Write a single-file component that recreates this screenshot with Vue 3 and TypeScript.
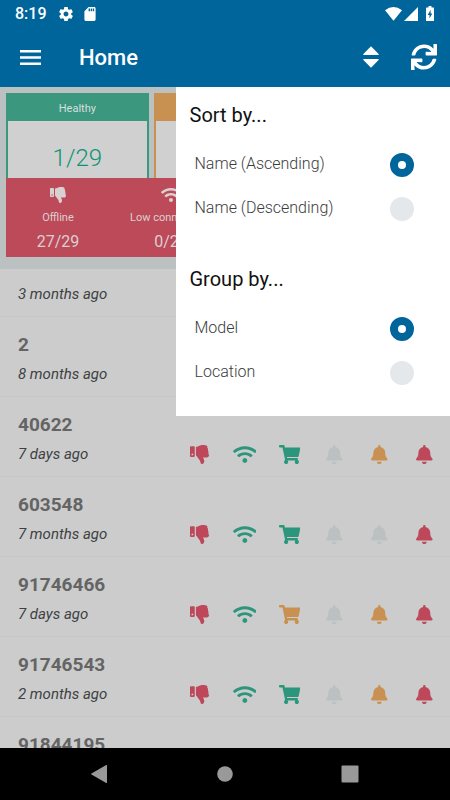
<script setup lang="ts">
import { ref } from 'vue'

type Tone = 'red' | 'green' | 'orange' | 'grey'
interface Glyph { box: string; d: string }
interface Device { name?: string; seen: string; tones: Tone[] }

const thumb: Glyph = {
  box: '0 0 512 512',
  d: 'M0 56v240c0 13.255 10.745 24 24 24h80c13.255 0 24-10.745 24-24V56c0-13.255-10.745-24-24-24H24C10.745 32 0 42.745 0 56zm40 200c0-13.255 10.745-24 24-24s24 10.745 24 24-10.745 24-24 24-24-10.745-24-24zm272 256c-20.183 0-29.485-39.293-33.931-57.795-5.206-21.666-10.589-44.070-25.393-58.902-32.469-32.524-49.503-73.967-89.117-113.111a11.980 11.980 0 0 1-3.558-8.521V59.901c0-6.541 5.243-11.878 11.784-11.998 15.831-.29 36.694-9.079 52.651-16.178C256.189 17.598 295.709.017 343.995 0h2.844c42.777 0 93.363.413 113.774 29.737 8.392 12.057 10.446 27.034 6.148 44.632 16.312 17.053 25.063 48.863 16.382 74.757 17.544 23.432 19.143 56.132 9.308 79.469l.11.11c11.893 11.949 19.523 31.259 19.439 49.197-.156 30.352-26.157 58.096-59.553 58.096H350.723C358.03 364.34 384 388.132 384 430.548 384 504 336 512 312 512z',
}
const wifi: Glyph = {
  box: '0 0 640 512',
  d: 'M634.91 154.88C457.74-8.99 182.19-8.93 5.09 154.88c-6.66 6.16-6.79 16.59-.35 22.98l34.24 33.97c6.14 6.1 16.02 6.23 22.4.38 145.92-133.68 371.3-133.71 517.25 0 6.38 5.85 16.26 5.71 22.4-.38l34.24-33.97c6.43-6.39 6.3-16.82-.36-22.98zM320 352c-35.35 0-64 28.65-64 64s28.65 64 64 64 64-28.65 64-64-28.65-64-64-64zm202.67-83.59c-115.26-101.93-290.21-101.82-405.34 0-6.9 6.1-7.12 16.69-.57 23.15l34.44 33.99c6 5.92 15.66 6.32 22.05.8 83.95-72.57 209.74-72.41 293.49 0 6.39 5.52 16.05 5.13 22.05-.8l34.44-33.99c6.56-6.46 6.33-17.06-.56-23.15z',
}
const cart: Glyph = {
  box: '0 0 576 512',
  d: 'M528.12 301.319l47.273-208C578.806 78.301 567.391 64 551.99 64H159.208l-9.166-44.81C147.758 8.021 137.93 0 126.529 0H24C10.745 0 0 10.745 0 24v16c0 13.255 10.745 24 24 24h69.883l70.248 343.435C147.325 417.1 136 435.222 136 456c0 30.928 25.072 56 56 56s56-25.072 56-56c0-15.674-6.447-29.835-16.824-40h209.647C430.447 426.165 424 440.326 424 456c0 30.928 25.072 56 56 56s56-25.072 56-56c0-22.172-12.888-41.332-31.579-50.405l5.517-24.276c3.413-15.018-8.002-29.319-23.403-29.319H218.117l-6.545-32h293.145c11.206 0 20.92-7.754 23.403-18.681z',
}
const bell: Glyph = {
  box: '0 0 448 512',
  d: 'M224 512c35.32 0 63.97-28.65 63.97-64H160.03c0 35.35 28.65 64 63.97 64zm215.39-149.71c-19.32-20.76-55.47-51.99-55.47-154.29 0-77.7-54.48-139.9-127.94-155.16V32c0-17.67-14.32-32-31.98-32s-31.98 14.33-31.98 32v20.84C118.56 68.1 64.08 130.3 64.08 208c0 102.3-36.15 133.53-55.47 154.29-6 6.45-8.66 14.16-8.61 21.71.11 16.4 12.98 32 32.1 32h383.8c19.12 0 32-15.6 32.1-32 .05-7.55-2.61-15.27-8.61-21.71z',
}
const glyphs: Glyph[] = [thumb, wifi, cart, bell, bell, bell]

const devices: Device[] = [
  { seen: '3 months ago', tones: [] },
  { name: '2', seen: '8 months ago', tones: [] },
  { name: '40622', seen: '7 days ago', tones: ['red', 'green', 'green', 'grey', 'orange', 'red'] },
  { name: '603548', seen: '7 months ago', tones: ['red', 'green', 'green', 'grey', 'grey', 'red'] },
  { name: '91746466', seen: '7 days ago', tones: ['red', 'green', 'orange', 'grey', 'orange', 'red'] },
  { name: '91746543', seen: '2 months ago', tones: ['red', 'green', 'green', 'grey', 'orange', 'red'] },
  { name: '91844195', seen: '', tones: [] },
]

const menuOpen = ref(true)
const sortBy = ref('asc')
const groupBy = ref('model')
const sortOptions = [
  { value: 'asc', label: 'Name (Ascending)' },
  { value: 'desc', label: 'Name (Descending)' },
]
const groupOptions = [
  { value: 'model', label: 'Model' },
  { value: 'location', label: 'Location' },
]
</script>

<template>
  <div class="app">
    <header class="top">
      <div class="status">
        <span class="clock">8:19</span>
        <svg class="gear" viewBox="2 2 20 20"><path d="M19.43 12.98c.04-.32.07-.64.07-.98s-.03-.66-.07-.98l2.11-1.65c.19-.15.24-.42.12-.64l-2-3.46c-.12-.22-.39-.3-.61-.22l-2.49 1c-.52-.4-1.08-.73-1.69-.98l-.38-2.65C14.46 2.18 14.25 2 14 2h-4c-.25 0-.46.18-.49.42l-.38 2.65c-.61.25-1.17.59-1.69.98l-2.49-1c-.23-.09-.49 0-.61.22l-2 3.46c-.13.22-.07.49.12.64l2.11 1.65c-.04.32-.07.65-.07.98s.03.66.07.98l-2.11 1.65c-.19.15-.24.42-.12.64l2 3.46c.12.22.39.3.61.22l2.49-1c.52.4 1.08.73 1.69.98l.38 2.65c.03.24.24.42.49.42h4c.25 0 .46-.18.49-.42l.38-2.65c.61-.25 1.17-.59 1.69-.98l2.49 1c.23.09.49 0 .61-.22l2-3.46c.12-.22.07-.49-.12-.64l-2.11-1.65zM12 15.5c-1.93 0-3.5-1.57-3.5-3.5s1.57-3.5 3.5-3.5 3.5 1.57 3.5 3.5-1.57 3.5-3.5 3.5z" /></svg>
        <svg class="sd" viewBox="4 2 16 20"><path d="M18 2h-8L4.02 8 4 20c0 1.100.9 2 2 2h12c1.100 0 2-.9 2-2V4c0-1.100-.9-2-2-2zm-6 6h-2V4h2v4zm3 0h-2V4h2v4zm3 0h-2V4h2v4z" /></svg>
        <span class="spacer"></span>
        <svg class="net" viewBox="0 0 17 14"><path d="M0 3.200Q8.500-3.200 17 3.200L8.500 13.700z" /></svg>
        <svg class="signal" viewBox="0 0 14 14"><path d="M14 0v14H0z" /></svg>
        <svg class="battery" viewBox="0 0 8 15"><path fill-rule="evenodd" d="M2.500 0h3v1.500H7.500q.5 0 .5.500v12.500q0 .5-.5.500h-7q-.5 0-.5-.5V2q0-.5.5-.5h2zM4.600 3.800L1.700 9h1.800v3.500L6.300 7.500H4.600z" /></svg>
      </div>
      <div class="bar">
        <button class="tool" aria-label="Open navigation">
          <svg class="burger" viewBox="0 0 21 15"><path d="M0 0h21v2.400H0zM0 6.300h21v2.400H0zM0 12.600h21V15H0z" /></svg>
        </button>
        <h1>Home</h1>
        <button class="tool" aria-label="Sort and group" @click="menuOpen = !menuOpen">
          <svg class="sort" viewBox="0 0 16 22"><path d="M8 .3L15.600 8q.6 1-.4 1H.8q-1 0-.4-1zM8 21.700L15.600 14q.6-1-.4-1H.8q-1 0-.4 1z" /></svg>
        </button>
        <button class="tool refresh" aria-label="Refresh">
          <svg class="sync" viewBox="0 0 512 512"><path d="M440.650 12.570l4 82.770A247.160 247.160 0 0 0 255.830 8C134.730 8 33.910 94.920 12.290 209.820A12 12 0 0 0 24.090 224h49.050a12 12 0 0 0 11.670-9.260 175.910 175.910 0 0 1 317-56.940l-101.460-4.860a12 12 0 0 0-12.570 12v47.410a12 12 0 0 0 12 12H500a12 12 0 0 0 12-12V12a12 12 0 0 0-12-12h-47.370a12 12 0 0 0-11.980 12.570zM255.830 432a175.610 175.610 0 0 1-146-77.800l101.800 4.870a12 12 0 0 0 12.570-12v-47.400a12 12 0 0 0-12-12H12a12 12 0 0 0-12 12V500a12 12 0 0 0 12 12h47.350a12 12 0 0 0 12-12.600l-4.150-82.570A247.170 247.170 0 0 0 255.830 504c121.110 0 221.930-86.920 243.550-201.820a12 12 0 0 0-11.800-14.180h-49.050a12 12 0 0 0-11.670 9.260A175.860 175.860 0 0 1 255.830 432z" /></svg>
        </button>
      </div>
    </header>

    <main class="content">
      <section class="summary">
        <div class="cards">
          <div class="card healthy">
            <div class="card-head">Healthy</div>
            <div class="card-value">1/29</div>
          </div>
          <div class="card warning"><div class="card-head"></div></div>
        </div>
        <div class="alerts">
          <div class="alert">
            <svg class="alert-icon" :viewBox="thumb.box"><path :d="thumb.d" /></svg>
            <span class="alert-label">Offline</span>
            <span class="alert-value">27/29</span>
          </div>
          <div class="alert">
            <svg class="alert-icon" :viewBox="wifi.box"><path :d="wifi.d" /></svg>
            <span class="alert-label">Low connectivity</span>
            <span class="alert-value">0/29</span>
          </div>
        </div>
      </section>

      <ul class="devices">
        <li v-for="device in devices" :key="device.name ?? device.seen" class="device">
          <h2 v-if="device.name">{{ device.name }}</h2>
          <div class="detail">
            <span class="seen">{{ device.seen }}</span>
            <div class="icons">
              <svg v-for="(tone, i) in device.tones" :key="i" class="icon" :class="tone" :viewBox="glyphs[i].box">
                <path :d="glyphs[i].d" />
              </svg>
            </div>
          </div>
        </li>
      </ul>

      <div v-if="menuOpen" class="menu">
        <section role="radiogroup" aria-labelledby="sort-title">
          <h3 id="sort-title">Sort by...</h3>
          <label v-for="o in sortOptions" :key="o.value" class="option">
            <span>{{ o.label }}</span>
            <input v-model="sortBy" type="radio" name="sort" :value="o.value" />
          </label>
        </section>
        <section role="radiogroup" aria-labelledby="group-title">
          <h3 id="group-title">Group by...</h3>
          <label v-for="o in groupOptions" :key="o.value" class="option">
            <span>{{ o.label }}</span>
            <input v-model="groupBy" type="radio" name="group" :value="o.value" />
          </label>
        </section>
      </div>
    </main>

    <nav class="system">
      <button aria-label="Back"><svg viewBox="0 0 18 18"><path d="M17 .5v17q0 .8-.8.400L1.500 9.500q-.8-.5 0-1L16.200.1q.8-.4.8.400z" /></svg></button>
      <button aria-label="Home screen"><svg viewBox="0 0 18 18"><circle cx="9" cy="9" r="7.800" /></svg></button>
      <button aria-label="Recent apps"><svg viewBox="0 0 18 18"><rect x=".5" y=".5" width="17" height="17" rx="1" /></svg></button>
    </nav>
  </div>
</template>

<style>
body {
  margin: 0;
}
</style>

<style scoped>
.app {
  display: flex;
  flex-direction: column;
  height: 100vh;
  overflow: hidden;
  background: #ccc;
  font-family: Roboto, sans-serif;
}
button {
  display: flex;
  align-items: center;
  justify-content: center;
  padding: 0;
  border: 0;
  background: none;
  color: inherit;
}
svg {
  display: block;
  fill: currentColor;
}
h1, h2, h3, ul {
  margin: 0;
  padding: 0;
}
.top {
  flex: none;
  background: #00659b;
  color: #fff;
}
.status {
  display: flex;
  align-items: center;
  height: 27px;
  padding: 0 16px 0 15px;
}
.clock {
  margin-right: 12px;
  font-size: 16px;
  font-weight: 500;
  line-height: 27px;
}
.gear {
  width: 14px;
  height: 14px;
  margin-right: 11px;
}
.sd {
  width: 12px;
  height: 14px;
}
.spacer {
  flex: 1;
}
.net {
  width: 17px;
  height: 14px;
  margin-right: 2px;
}
.signal {
  width: 14px;
  height: 14px;
  margin-right: 8px;
}
.battery {
  width: 8px;
  height: 15px;
}
.bar {
  display: flex;
  align-items: center;
  height: 60px;
  padding: 0 10px 0 14px;
}
.tool {
  width: 32px;
  height: 40px;
}
.refresh {
  margin-left: 21px;
}
.burger {
  width: 21px;
  height: 15px;
}
.sort {
  width: 16px;
  height: 22px;
}
.sync {
  width: 26px;
  height: 26px;
}
h1 {
  flex: 1;
  margin-left: 33px;
  padding-top: 2px;
  font-size: 22px;
  font-weight: 500;
  line-height: 30px;
}
.content {
  position: relative;
  flex: 1;
  min-height: 0;
  overflow: hidden;
}
.summary {
  padding: 6px 6px 12px;
  background: #bbc0c1;
}
.cards {
  display: grid;
  grid-template-columns: repeat(3, 1fr);
  gap: 5px;
  height: 85px;
}
.card {
  display: flex;
  flex-direction: column;
  box-sizing: border-box;
  border: 2px solid;
  border-bottom: 0;
  background: #d0d0d0;
  text-align: center;
}
.healthy {
  border-color: #3b987f;
}
.warning {
  border-color: #c89151;
}
.card-head {
  height: 26px;
  font-size: 11px;
  line-height: 28px;
  color: #d5dfdc;
}
.healthy .card-head {
  background: #3b987f;
}
.warning .card-head {
  background: #c89151;
}
.card-value {
  padding-top: 17px;
  font-size: 24px;
  font-weight: 300;
  line-height: 40px;
  color: #0d9475;
}
.alerts {
  display: grid;
  grid-template-columns: 104px 122px 1fr;
  height: 79px;
  background: #bd4a59;
  color: #d9d0d1;
}
.alert {
  display: flex;
  flex-direction: column;
  align-items: center;
  padding-top: 9px;
}
.alert-icon {
  height: 16px;
}
.alert-label {
  margin-top: 7px;
  font-size: 11px;
  line-height: 16px;
}
.alert-value {
  margin-top: 5px;
  font-size: 16px;
  line-height: 22px;
}
.devices {
  list-style: none;
}
.device {
  box-sizing: border-box;
  height: 80px;
  padding-top: 15px;
  border-bottom: 1px solid #c6c7c7;
}
.device:first-child {
  height: 48px;
}
h2 {
  margin-bottom: 7px;
  padding-top: 1px;
  padding-left: 18px;
  font-size: 19px;
  font-weight: 700;
  line-height: 24px;
  color: #646464;
}
.detail {
  display: flex;
  align-items: center;
  height: 20px;
}
.seen {
  flex: 1;
  padding-left: 18px;
  font-size: 15px;
  font-style: italic;
  line-height: 20px;
  color: #3c4244;
}
.icons {
  display: grid;
  grid-template-columns: repeat(6, 1fr);
  justify-items: center;
  width: 60%;
  margin-right: 3px;
}
.icon {
  height: 19px;
}
.red {
  color: #be4859;
}
.green {
  color: #2b967b;
}
.orange {
  color: #c89151;
}
.grey {
  color: #bbc0c1;
}
.menu {
  position: absolute;
  top: 0;
  right: 0;
  display: flex;
  flex-direction: column;
  gap: 36px;
  box-sizing: border-box;
  width: 61%;
  padding: 16px 36px 21px 14px;
  background: #fff;
}
h3 {
  margin-bottom: 16px;
  font-size: 20px;
  font-weight: 400;
  line-height: 24px;
  color: #111;
}
.option {
  display: flex;
  align-items: center;
  justify-content: space-between;
  height: 44px;
  padding-left: 5px;
  font-size: 16px;
  font-weight: 300;
  color: #3c3c3c;
}
.option span {
  padding-bottom: 3px;
}
.option input {
  appearance: none;
  box-sizing: border-box;
  width: 24px;
  height: 24px;
  margin: 0;
  border-radius: 50%;
  background: #e4e8eb;
}
.option input:checked {
  border: 8px solid #00659b;
  background: #fff;
}
.system {
  display: flex;
  flex: none;
  align-items: center;
  justify-content: space-between;
  height: 52px;
  padding: 0 91px 0 90px;
  background: #000;
  color: #999;
}
.system svg {
  width: 18px;
  height: 18px;
}
</style>
